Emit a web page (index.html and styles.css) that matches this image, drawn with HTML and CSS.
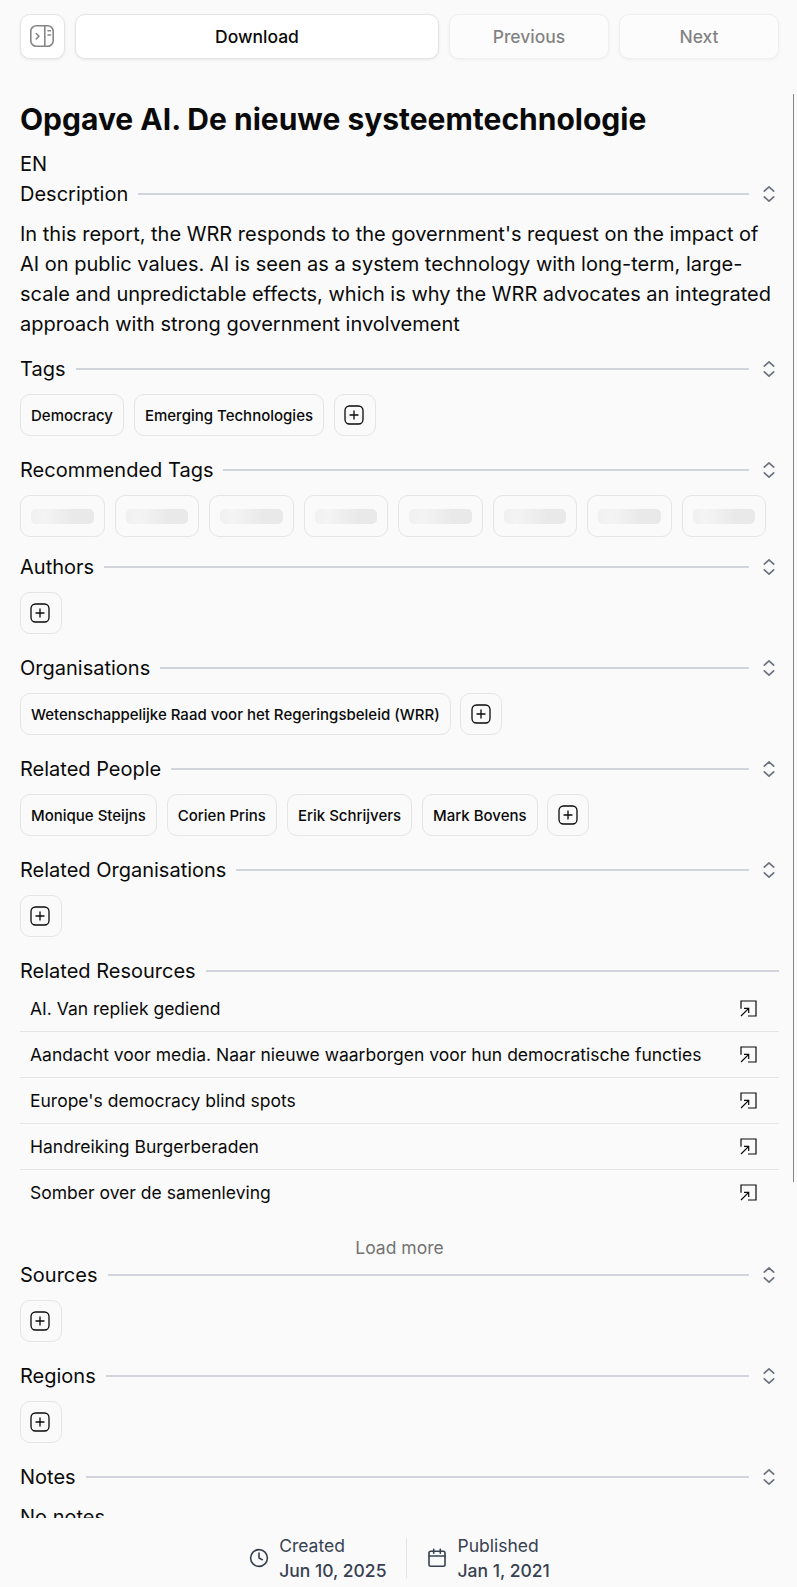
FILE: index.html
```html
<!DOCTYPE html>
<html lang="en">
<head>
<meta charset="utf-8">
<title>Opgave AI. De nieuwe systeemtechnologie</title>
<link rel="stylesheet" href="styles.css">
</head>
<body>
<svg class="defs" width="0" height="0" aria-hidden="true">
  <symbol id="plus" viewBox="0 0 20 20"><rect x="1" y="1" width="18" height="18" rx="4.5"/><path d="M10 6v8M6 10h8"/></symbol>
  <symbol id="chevrons" viewBox="0 0 20 20"><path d="M5.300 7.200 10 2.900l4.700 4.300M5.300 12.800 10 17.100l4.700-4.300"/></symbol>
  <symbol id="open" viewBox="0 0 17 17"><path d="M1 8.700V1h15v15H8M1 16l7.700-7.700M4 8.300h4.700V13"/></symbol>
</svg>
<div class="page">
  <header class="toolbar">
    <button class="btn btn-icon"><svg width="24" height="22" viewBox="0 0 24 22"><rect x=".8" y=".8" width="22.400" height="20.400" rx="5.500"/><path d="M14.800 1v20M6.300 8.500l2.700 2.700-2.700 2.700M18 5.700h2.500M18 10h2.500"/></svg></button>
    <button class="btn btn-main">Download</button>
    <button class="btn btn-nav">Previous</button>
    <button class="btn btn-nav">Next</button>
  </header>
  <main class="scroll">
    <h1>Opgave AI. De nieuwe systeemtechnologie</h1>
    <div class="lang">EN</div>
    <section>
      <div class="head"><h2>Description</h2><i></i><svg><use href="#chevrons"/></svg></div>
      <p class="text">In this report, the WRR responds to the government's request on the impact of AI on public values. AI is seen as a system technology with long-term, large-scale and unpredictable effects, which is why the WRR advocates an integrated approach with strong government involvement</p>
    </section>
    <section class="tagged">
      <div class="head"><h2>Tags</h2><i></i><svg><use href="#chevrons"/></svg></div>
      <div class="chips"><span class="chip">Democracy</span><span class="chip">Emerging Technologies</span><span class="chip add"><svg><use href="#plus"/></svg></span></div>
    </section>
    <section>
      <div class="head"><h2>Recommended Tags</h2><i></i><svg><use href="#chevrons"/></svg></div>
      <div class="chips loading"><span class="chip"><b></b></span><span class="chip"><b></b></span><span class="chip"><b></b></span><span class="chip"><b></b></span><span class="chip"><b></b></span><span class="chip"><b></b></span><span class="chip"><b></b></span><span class="chip"><b></b></span></div>
    </section>
    <section class="tagged">
      <div class="head"><h2>Authors</h2><i></i><svg><use href="#chevrons"/></svg></div>
      <div class="chips"><span class="chip add"><svg><use href="#plus"/></svg></span></div>
    </section>
    <section class="tagged">
      <div class="head"><h2>Organisations</h2><i></i><svg><use href="#chevrons"/></svg></div>
      <div class="chips"><span class="chip">Wetenschappelijke Raad voor het Regeringsbeleid (WRR)</span><span class="chip add"><svg><use href="#plus"/></svg></span></div>
    </section>
    <section class="tagged">
      <div class="head"><h2>Related People</h2><i></i><svg><use href="#chevrons"/></svg></div>
      <div class="chips"><span class="chip">Monique Steijns</span><span class="chip">Corien Prins</span><span class="chip">Erik Schrijvers</span><span class="chip">Mark Bovens</span><span class="chip add"><svg><use href="#plus"/></svg></span></div>
    </section>
    <section class="tagged">
      <div class="head"><h2>Related Organisations</h2><i></i><svg><use href="#chevrons"/></svg></div>
      <div class="chips"><span class="chip add"><svg><use href="#plus"/></svg></span></div>
    </section>
    <section class="resources">
      <div class="head wide"><h2>Related Resources</h2><i></i></div>
      <ul>
        <li>AI. Van repliek gediend<svg><use href="#open"/></svg></li>
        <li>Aandacht voor media. Naar nieuwe waarborgen voor hun democratische functies<svg><use href="#open"/></svg></li>
        <li>Europe's democracy blind spots<svg><use href="#open"/></svg></li>
        <li>Handreiking Burgerberaden<svg><use href="#open"/></svg></li>
        <li>Somber over de samenleving<svg><use href="#open"/></svg></li>
      </ul>
      <div class="more">Load more</div>
    </section>
    <section class="tagged">
      <div class="head"><h2>Sources</h2><i></i><svg><use href="#chevrons"/></svg></div>
      <div class="chips"><span class="chip add"><svg><use href="#plus"/></svg></span></div>
    </section>
    <section class="tagged">
      <div class="head"><h2>Regions</h2><i></i><svg><use href="#chevrons"/></svg></div>
      <div class="chips"><span class="chip add"><svg><use href="#plus"/></svg></span></div>
    </section>
    <section>
      <div class="head"><h2>Notes</h2><i></i><svg><use href="#chevrons"/></svg></div>
      <p class="text">No notes</p>
    </section>
    <div class="thumb"></div>
  </main>
  <footer class="meta">
    <div class="item"><svg viewBox="0 0 20 20"><circle cx="10" cy="10" r="8.400"/><path d="M10 5v5l3.300 1.700"/></svg><div>Created<br><strong>Jun 10, 2025</strong></div></div>
    <div class="item"><svg viewBox="0 0 20 20"><rect x="2" y="3.300" width="16" height="15" rx="1.700"/><path d="M2 8h16M6.700 1.200v4M13.300 1.200v4"/></svg><div>Published<br><strong>Jan 1, 2021</strong></div></div>
  </footer>
</div>
</body>
</html>
```
FILE: styles.css
```css
* { box-sizing: border-box; }
body, h1, h2, p, ul { margin: 0; padding: 0; }
body { background: #fafafa; color: #0a0a0a; font: 400 20px/30px Inter, sans-serif; }
.defs { position: absolute; }
svg { fill: none; stroke: currentColor; stroke-linecap: round; stroke-linejoin: round; flex: none; }
.page { height: 1587px; display: flex; flex-direction: column; overflow: hidden; }
.toolbar { display: flex; gap: 10px; padding: 14px 18px 0 20px; height: 94px; flex: none; }
.btn { height: 45px; padding: 0; border: 1px solid #e5e5e5; border-radius: 10px; background: #fff; color: #0a0a0a; font: 500 17.500px/25px Inter, sans-serif; box-shadow: 0 1px 3px rgba(0, 0, 0, .08); }
.btn-icon { width: 45px; padding: 0 1px 1px 0; display: flex; align-items: center; justify-content: center; color: #858585; }
.btn-icon svg { stroke-width: 1.600; }
.btn-main { flex: 1; }
.btn-nav { width: 160px; opacity: .5; }
.scroll { position: relative; height: 1424px; flex: none; overflow: hidden; padding: 6px 18px 0 20px; }
h1 { font-size: 30px; line-height: 38px; font-weight: 700; margin-bottom: 11px; }
section { margin-bottom: 15px; }
.tagged { margin-bottom: 19px; }
.head { display: flex; align-items: center; height: 30px; gap: 10px; }
h2 { font-size: 20px; font-weight: 400; line-height: 30px; }
.head i { flex: 1; height: 2px; background: #d1d5db; }
.head svg { width: 20px; height: 20px; color: #6b7280; stroke-width: 1.700; }
.text { padding-top: 10px; }
.chips { display: flex; gap: 10px; padding-top: 10px; }
.chip { height: 42px; padding: 0 10px; border: 1px solid #e5e5e5; border-radius: 10px; font-size: 15px; font-weight: 500; line-height: 41px; white-space: nowrap; }
.add { width: 42px; padding: 10px; margin-left: -.4px; }
.add:first-child { margin-left: 0; }
.add svg { display: block; width: 20px; height: 20px; margin-left: -.6px; stroke-width: 1.300; }
.loading .chip { width: 84.500px; padding: 13px 10px; }
.chip b { display: block; height: 15px; border-radius: 5px; background: linear-gradient(90deg, #f0f0f0, #f4f4f4 20%, #e9e9e9 70%); }
.resources { height: 289px; }
ul { list-style: none; }
li { display: flex; align-items: center; justify-content: space-between; height: 46px; padding: 0 22px 0 10px; border-bottom: 1px solid #e5e5e5; font-size: 17.500px; line-height: 25px; }
li:last-child { height: 45px; border-bottom: 0; }
li svg { width: 17px; height: 17px; stroke-width: 1.200; stroke-linecap: butt; stroke-linejoin: miter; }
.more { margin-top: 18px; text-align: center; font-size: 17.500px; line-height: 30px; color: #737373; }
.thumb { position: absolute; right: 3px; top: 0; width: 1px; height: 1088px; background: #858585; }
.meta { display: flex; justify-content: center; padding: 20px 0 0 2px; color: #374151; font-size: 17.500px; line-height: 25px; }
.item { display: flex; align-items: center; gap: 10px; height: 40px; padding: 0 20px; white-space: nowrap; }
.item + .item { border-left: 1px solid #e5e5e5; }
.item svg { width: 20px; height: 20px; stroke-width: 1.600; }
.item strong { font-weight: 500; }
```
